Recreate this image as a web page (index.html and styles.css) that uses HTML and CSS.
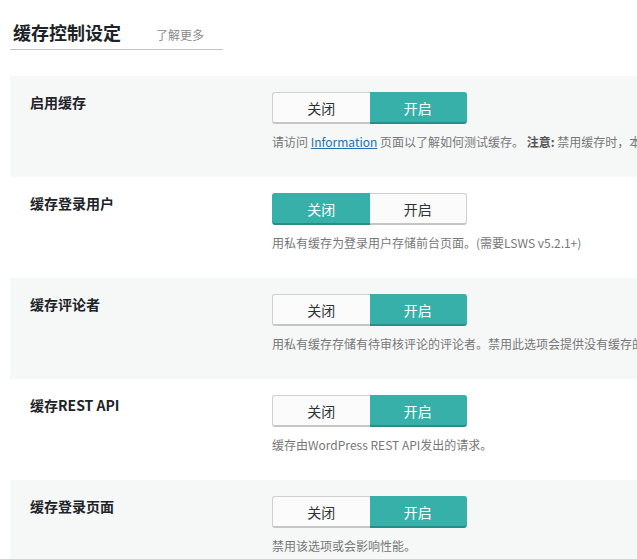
FILE: index.html
```html
<!DOCTYPE html>
<html lang="zh-CN">
<head>
  <meta charset="UTF-8" />
  <meta name="viewport" content="width=device-width, initial-scale=1.0"/>
  <title>缓存控制设定</title>
  <link rel="stylesheet" href="styles.css">
</head>
<body>

  <div class="page-head">
    <h3>缓存控制设定</h3>
    <a class="learn-more" href="#">了解更多</a>
  </div>

  <div class="settings">
    <div class="row shaded">
      <div class="label">启用缓存</div>
      <div class="field">
        <div class="switch">
          <button class="off">关闭</button>
          <button class="on active">开启</button>
        </div>
        <div class="desc">请访问 <a href="#">Information</a> 页面以了解如何测试缓存。 <b>注意:</b> 禁用缓存时，本站所有已缓存的内容将被清除。</div>
      </div>
    </div>

    <div class="row">
      <div class="label">缓存登录用户</div>
      <div class="field">
        <div class="switch">
          <button class="off active">关闭</button>
          <button class="on">开启</button>
        </div>
        <div class="desc">用私有缓存为登录用户存储前台页面。(需要LSWS v5.2.1+)</div>
      </div>
    </div>

    <div class="row shaded">
      <div class="label">缓存评论者</div>
      <div class="field">
        <div class="switch">
          <button class="off">关闭</button>
          <button class="on active">开启</button>
        </div>
        <div class="desc">用私有缓存存储有待审核评论的评论者。禁用此选项会提供没有缓存的页面给评论者。</div>
      </div>
    </div>

    <div class="row">
      <div class="label">缓存REST API</div>
      <div class="field">
        <div class="switch">
          <button class="off">关闭</button>
          <button class="on active">开启</button>
        </div>
        <div class="desc">缓存由WordPress REST API发出的请求。</div>
      </div>
    </div>

    <div class="row shaded">
      <div class="label">缓存登录页面</div>
      <div class="field">
        <div class="switch">
          <button class="off">关闭</button>
          <button class="on active">开启</button>
        </div>
        <div class="desc">禁用该选项或会影响性能。</div>
      </div>
    </div>
  </div>

</body>
</html>
```

FILE: styles.css
```css
body {
  font-family: "Noto Sans CJK SC", "Open Sans", sans-serif;
  background-color: #fff;
  color: #23282d;
  margin: 0;
  overflow: hidden;
}

.page-head {
  display: flex;
  align-items: baseline;
  gap: 35px;
  width: 210px;
  margin: 20px 0 0 10px;
  padding: 0 0 5px 3px;
  border-bottom: 1px solid #c3c4c7;
}

.page-head h3 {
  margin: 0;
  font-size: 18px;
  line-height: 24px;
  font-weight: bold;
  color: #1d2327;
}

.learn-more {
  font-size: 12px;
  color: #8a8a8a;
  text-decoration: none;
}

.settings {
  margin: 26px 0 0 10px;
}

.row {
  display: flex;
  height: 101px;
  box-sizing: border-box;
  padding-top: 16px;
  white-space: nowrap;
}

.row.shaded {
  background-color: #f6f7f7;
}

.label {
  width: 242px;
  flex-shrink: 0;
  padding-left: 20px;
  font-size: 14px;
  font-weight: bold;
  line-height: 20px;
  color: #1d2327;
}

.switch {
  display: flex;
  width: 195px;
  height: 32px;
}

.switch button {
  flex: 1;
  font-family: inherit;
  font-size: 14px;
  color: #2c3338;
  background-color: #fbfbfb;
  border: 1px solid #d0d0d0;
  border-bottom: 2px solid #c6c6c6;
  padding: 0;
  cursor: pointer;
}

.switch .off {
  border-radius: 3px 0 0 3px;
  border-right: none;
}

.switch .on {
  border-radius: 0 3px 3px 0;
  border-left: none;
}

.switch button.active {
  background-color: #36b0a9;
  border-color: #36b0a9;
  border-bottom-color: #2a8c86;
  color: #fff;
}

.desc {
  margin-top: 10px;
  font-size: 12px;
  line-height: 16px;
  color: #777;
}

.desc a {
  color: #2271b1;
}

.desc b {
  font-weight: bold;
  color: #555;
}
```
